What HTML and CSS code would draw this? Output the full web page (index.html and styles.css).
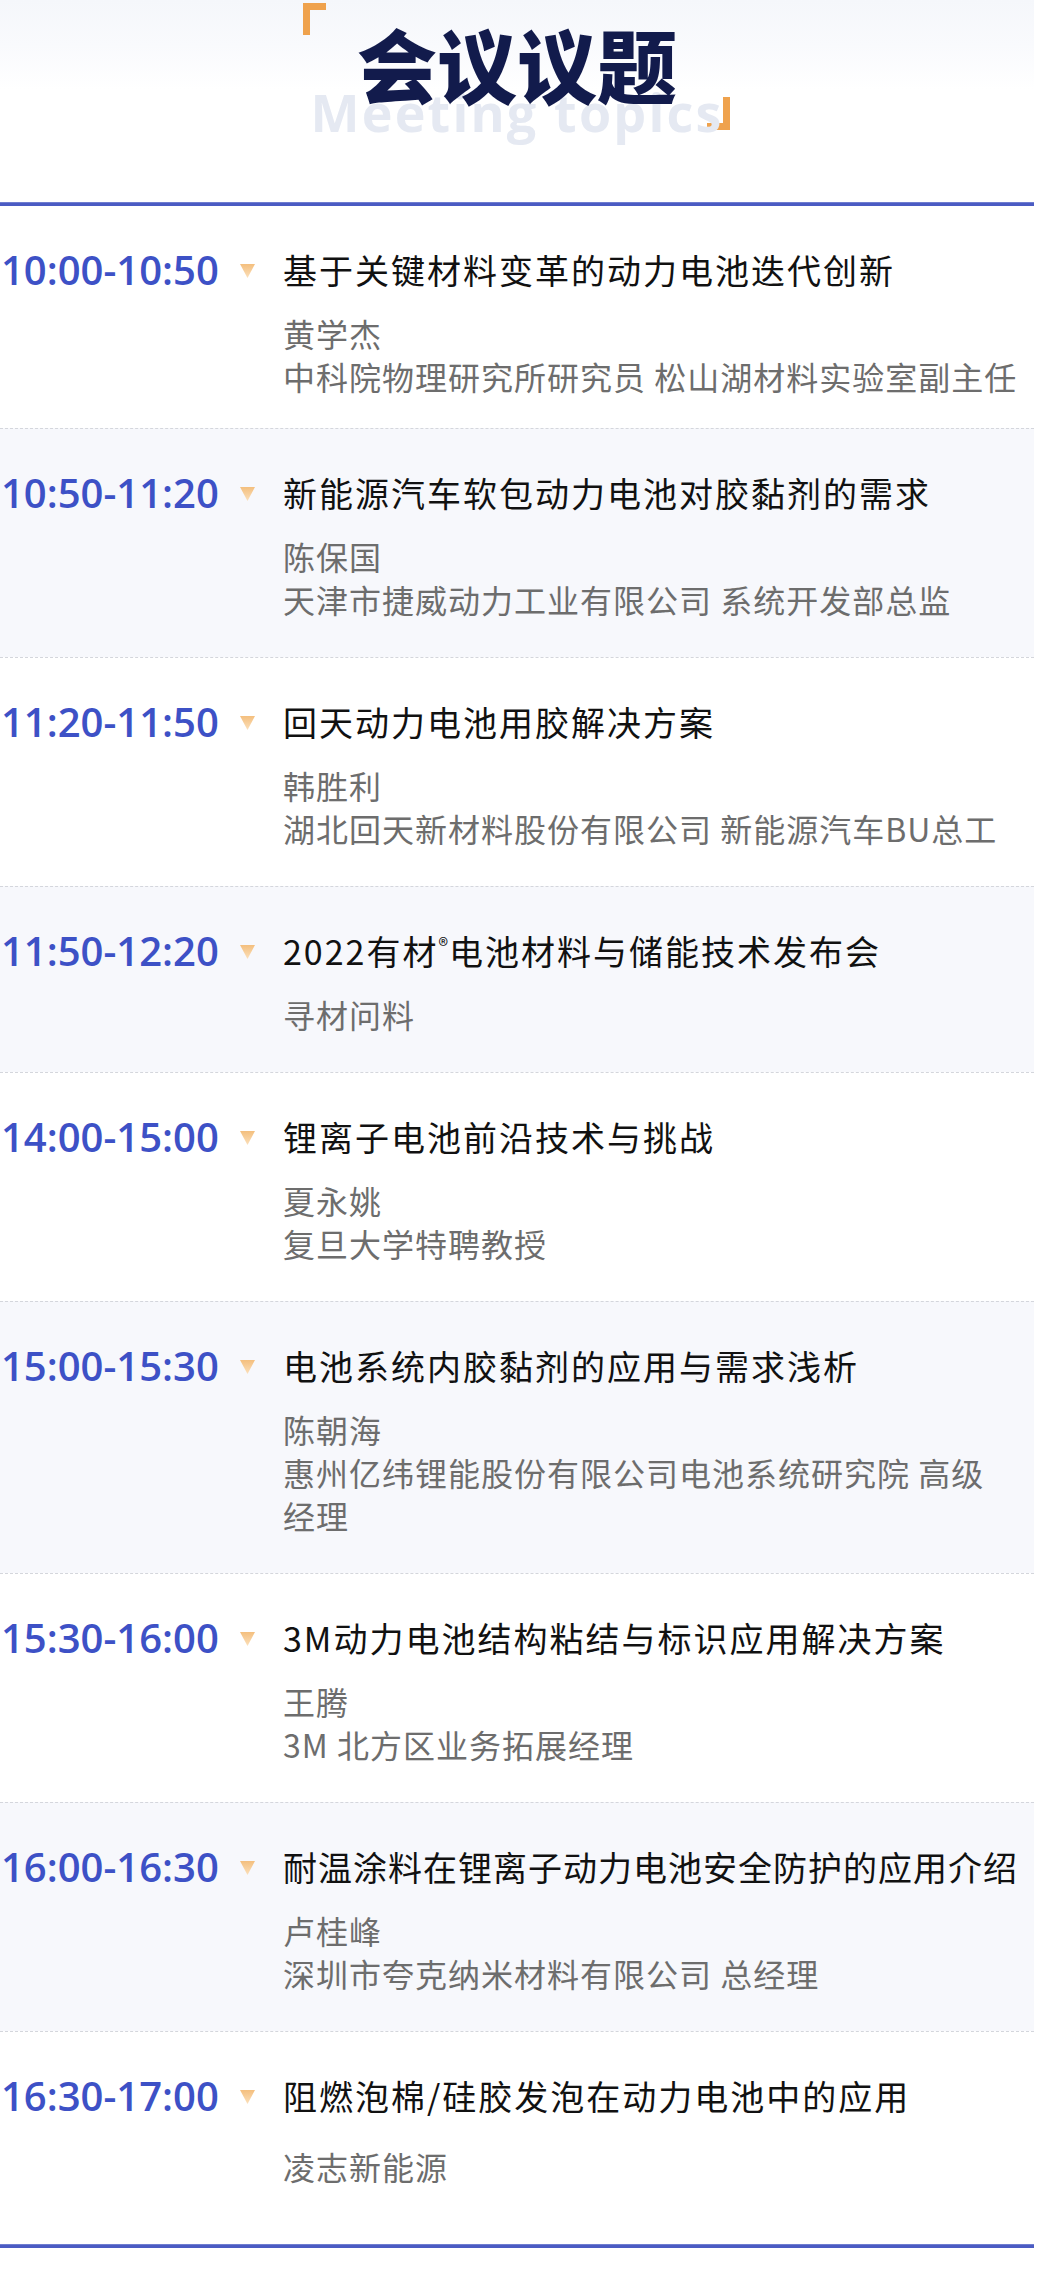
FILE: index.html
```html
<!DOCTYPE html>
<html lang="zh-CN">
<head>
<meta charset="utf-8">
<title>会议议题</title>
<link rel="stylesheet" href="styles.css">
</head>
<body>
<div class="page">
  <header class="hero">
    <span class="bracket bracket-tl"></span>
    <span class="bracket bracket-br"></span>
    <div class="hero-sub">Meeting topics</div>
    <h1 class="hero-title">会议议题</h1>
  </header>
  <div class="rule"></div>
  <ul class="agenda">
    <li class="item">
      <div class="when"><span class="time">10:00-10:50</span><span class="tri"></span></div>
      <div class="what">
        <div class="topic">基于关键材料变革的动力电池迭代创新</div>
        <div class="meta"><div>黄学杰</div><div>中科院物理研究所研究员 松山湖材料实验室副主任</div></div>
      </div>
    </li>
    <li class="item">
      <div class="when"><span class="time">10:50-11:20</span><span class="tri"></span></div>
      <div class="what">
        <div class="topic">新能源汽车软包动力电池对胶黏剂的需求</div>
        <div class="meta"><div>陈保国</div><div>天津市捷威动力工业有限公司 系统开发部总监</div></div>
      </div>
    </li>
    <li class="item">
      <div class="when"><span class="time">11:20-11:50</span><span class="tri"></span></div>
      <div class="what">
        <div class="topic">回天动力电池用胶解决方案</div>
        <div class="meta"><div>韩胜利</div><div>湖北回天新材料股份有限公司 新能源汽车BU总工</div></div>
      </div>
    </li>
    <li class="item">
      <div class="when"><span class="time">11:50-12:20</span><span class="tri"></span></div>
      <div class="what">
        <div class="topic">2022有材<span class="reg">®</span>电池材料与储能技术发布会</div>
        <div class="meta"><div>寻材问料</div></div>
      </div>
    </li>
    <li class="item">
      <div class="when"><span class="time">14:00-15:00</span><span class="tri"></span></div>
      <div class="what">
        <div class="topic">锂离子电池前沿技术与挑战</div>
        <div class="meta"><div>夏永姚</div><div>复旦大学特聘教授</div></div>
      </div>
    </li>
    <li class="item">
      <div class="when"><span class="time">15:00-15:30</span><span class="tri"></span></div>
      <div class="what">
        <div class="topic">电池系统内胶黏剂的应用与需求浅析</div>
        <div class="meta"><div>陈朝海</div><div>惠州亿纬锂能股份有限公司电池系统研究院 高级<span class="nowrap">经理</span></div></div>
      </div>
    </li>
    <li class="item">
      <div class="when"><span class="time">15:30-16:00</span><span class="tri"></span></div>
      <div class="what">
        <div class="topic">3M动力电池结构粘结与标识应用解决方案</div>
        <div class="meta"><div>王腾</div><div>3M 北方区业务拓展经理</div></div>
      </div>
    </li>
    <li class="item">
      <div class="when"><span class="time">16:00-16:30</span><span class="tri"></span></div>
      <div class="what">
        <div class="topic topic-snug">耐温涂料在锂离子动力电池安全防护的应用介绍</div>
        <div class="meta"><div>卢桂峰</div><div>深圳市夸克纳米材料有限公司 总经理</div></div>
      </div>
    </li>
    <li class="item item-last">
      <div class="when"><span class="time">16:30-17:00</span><span class="tri"></span></div>
      <div class="what">
        <div class="topic">阻燃泡棉/硅胶发泡在动力电池中的应用</div>
        <div class="meta"><div>凌志新能源</div></div>
      </div>
    </li>
  </ul>
  <div class="rule"></div>
</div>
</body>
</html>
```

FILE: styles.css
```css
* { box-sizing: border-box; }

html, body {
  margin: 0;
  padding: 0;
  background: #ffffff;
}

body {
  font-family: "Noto Sans CJK SC", "Noto Sans", sans-serif;
  color: #111111;
}

.page {
  width: 1034px;
}

.hero {
  position: relative;
  height: 202px;
  padding-top: 22px;
  background: linear-gradient(to bottom, #f5f7fb 0px, #f9fafd 45px, #ffffff 90px);
  text-align: center;
}

.hero-title {
  position: relative;
  z-index: 1;
  margin: 0;
  font-family: "Noto Sans CJK SC", sans-serif;
  font-weight: 900;
  font-size: 80px;
  line-height: 80px;
  color: #121b4c;
  letter-spacing: 0;
}

.hero-sub {
  position: absolute;
  left: 0;
  right: 0;
  top: 86px;
  font-family: "Open Sans", "Noto Sans", sans-serif;
  font-weight: 700;
  font-size: 52px;
  line-height: 52px;
  letter-spacing: 2.2px;
  color: #e5e9f2;
  text-align: center;
}

.bracket {
  position: absolute;
  width: 23px;
  height: 32px;
  border: 0 solid #efa24d;
}

.bracket-tl {
  left: 303px;
  top: 3px;
  border-top-width: 7px;
  border-left-width: 7px;
}

.bracket-br {
  left: 707px;
  top: 97px;
  height: 33px;
  border-bottom-width: 7px;
  border-right-width: 7px;
}

.rule {
  height: 4px;
  background: #4b5bc3;
  border-top: 1px solid #6f7dd0;
}

.agenda {
  list-style: none;
  margin: 0;
  padding: 0;
}

.item {
  display: grid;
  grid-template-columns: 283px 1fr;
  padding: 40px 0 36px;
}

.item:first-child {
  padding-bottom: 30px;
}

.item + .item {
  border-top: 1px dashed #d4d6dc;
}

.item:nth-child(even) {
  background: #f7f8fc;
}

.when {
  display: flex;
  align-items: center;
  height: 48px;
}

.time {
  width: 240px;
  padding-left: 1px;
  font-family: "Open Sans", "Noto Sans", sans-serif;
  font-weight: 600;
  font-size: 40px;
  line-height: 48px;
  color: #3d51c6;
  white-space: nowrap;
}

.tri {
  width: 15px;
  height: 14px;
  margin-top: 2px;
  background: linear-gradient(to bottom, #f4bf7e, #fbe0bb);
  clip-path: polygon(0 0, 100% 0, 50% 100%);
}

.topic {
  font-size: 34px;
  line-height: 48px;
  letter-spacing: 2px;
  color: #111111;
  white-space: nowrap;
}

.topic-snug {
  letter-spacing: 1px;
}

.reg {
  font-size: 20px;
  line-height: 0;
  vertical-align: super;
  letter-spacing: 1px;
}

.meta {
  margin-top: 18px;
  font-size: 32px;
  line-height: 43px;
  letter-spacing: 1px;
  color: #6d6d6d;
}

.nowrap {
  white-space: nowrap;
}

.item-last {
  padding-bottom: 56px;
}

.item-last .meta {
  margin-top: 25px;
}
```
